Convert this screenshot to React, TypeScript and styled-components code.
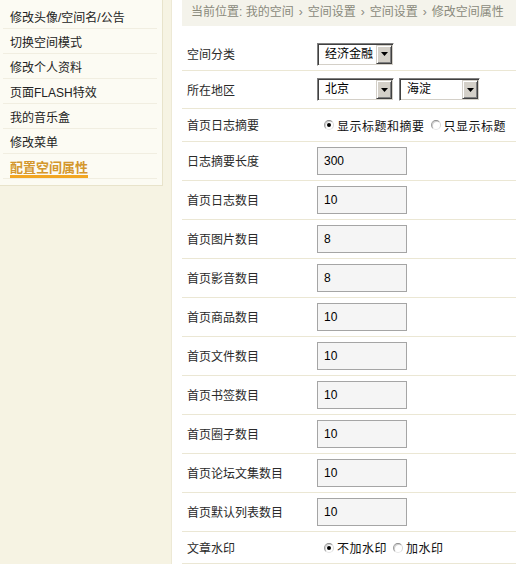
import React from "react";
import styled, { createGlobalStyle } from "styled-components";

const GlobalStyle = createGlobalStyle`
  html, body {
    margin: 0;
    padding: 0;
    background: #f6f3e3;
  }
  body {
    font-family: "Liberation Sans", "Noto Sans CJK SC", sans-serif;
    font-size: 12px;
    color: #222;
  }
  * { box-sizing: border-box; }
`;

const Page = styled.div`
  display: flex;
  align-items: stretch;
  min-height: 100vh;
`;

/* ---------- left menu ---------- */

const Sidebar = styled.nav`
  flex: none;
  align-self: flex-start;
  width: 163px;
  padding: 4px 5px 6px 3px;
  background: #fcfbf3;
  border-right: 1px solid #e8e3cb;
  border-bottom: 1px solid #e8e3cb;
`;

const MenuList = styled.ul`
  list-style: none;
  margin: 0;
  padding: 0;
`;

const MenuItem = styled.li<{ $active?: boolean }>`
  display: flex;
  align-items: ${(p) => (p.$active ? "flex-end" : "center")};
  height: 25px;
  padding-left: 7px;
  border-bottom: 1px solid #f1eee1;
  color: #222;
  font-size: 12px;
  white-space: nowrap;
`;

const ActiveLabel = styled.span`
  display: inline-block;
  font-size: 13px;
  line-height: 15px;
  font-weight: bold;
  color: #d4972c;
  border-bottom: 3px solid #f2a623;
`;

/* ---------- main panel ---------- */

const Main = styled.main`
  flex: 1;
  margin-left: 8px;
  padding-left: 10px;
  background: #fff;
  border-left: 1px solid #ede9d5;
`;

const Breadcrumb = styled.div`
  height: 26px;
  line-height: 25px;
  padding-left: 9px;
  background: #f4f3eb;
  color: #8a8a7c;
  font-size: 12px;
  white-space: nowrap;
`;

const Sep = styled.span`
  margin: 0 5px;
`;

const Form = styled.div`
  margin-top: 12px;
`;

const Row = styled.div<{ $h: number }>`
  display: flex;
  align-items: center;
  height: ${(p) => p.$h}px;
  padding-left: 5px;
  border-bottom: 1px solid #ebe7d4;
`;

const Label = styled.div`
  flex: none;
  width: 130px;
  color: #2a2a2a;
  font-size: 12px;
  padding-bottom: 1px;
`;

const Controls = styled.div`
  display: flex;
  align-items: center;
  gap: 5px;
`;

const TextInput = styled.div`
  width: 90px;
  height: 28px;
  line-height: 26px;
  padding-left: 6px;
  border: 1px solid #a5a5a5;
  background: #f5f5f5;
  color: #000;
  font-family: "Liberation Sans", Arial, sans-serif;
  font-size: 12px;
`;

const SelectBox = styled.div<{ $w: number }>`
  display: flex;
  align-items: stretch;
  width: ${(p) => p.$w}px;
  height: 23px;
  background: #fff;
  border: 1px solid;
  border-color: #808080 #ffffff #ffffff #808080;
  box-shadow: inset 1px 1px 0 #404040, inset -1px -1px 0 #d4d0c8;
  padding: 1px;
`;

const SelectText = styled.div`
  flex: 1;
  padding-left: 6px;
  line-height: 19px;
  font-size: 12px;
  color: #000;
  white-space: nowrap;
  overflow: hidden;
`;

const DropButton = styled.div`
  flex: none;
  width: 16px;
  display: flex;
  align-items: center;
  justify-content: center;
  background: #d4d0c8;
  border: 1px solid;
  border-color: #d4d0c8 #404040 #404040 #d4d0c8;
  box-shadow: inset 1px 1px 0 #ffffff, inset -1px -1px 0 #808080;
`;

const RadioGroup = styled.div`
  display: flex;
  align-items: center;
  padding-left: 7px;
`;

const RadioOption = styled.label`
  display: inline-flex;
  align-items: center;
  gap: 3px;
  margin-right: 6px;
  font-size: 12px;
  letter-spacing: 0.5px;
  color: #111;
  white-space: nowrap;
`;

const RadioDot = styled.span<{ $on?: boolean }>`
  position: relative;
  width: 10px;
  height: 10px;
  border-radius: 50%;
  background: #fff;
  border: 1px solid;
  border-color: #8d8d8d #d8d8d8 #e6e6e6 #9a9a9a;
  box-shadow: inset 1px 1px 0 #d0d0d0;
  &::after {
    content: "";
    display: ${(p) => (p.$on ? "block" : "none")};
    position: absolute;
    left: 2px;
    top: 2px;
    width: 4px;
    height: 4px;
    border-radius: 50%;
    background: #000;
  }
`;

const Arrow = () => (
  <svg width="7" height="4" viewBox="0 0 7 4">
    <polygon points="0,0 7,0 3.5,4" fill="#000" />
  </svg>
);

const Select = ({ value, width }: { value: string; width: number }) => (
  <SelectBox $w={width}>
    <SelectText>{value}</SelectText>
    <DropButton>
      <Arrow />
    </DropButton>
  </SelectBox>
);

const Radio = ({ label, on }: { label: string; on?: boolean }) => (
  <RadioOption>
    <RadioDot $on={on} />
    {label}
  </RadioOption>
);

const menu = [
  "修改头像/空间名/公告",
  "切换空间模式",
  "修改个人资料",
  "页面FLASH特效",
  "我的音乐盒",
  "修改菜单",
];

const numberFields: [string, string][] = [
  ["日志摘要长度", "300"],
  ["首页日志数目", "10"],
  ["首页图片数目", "8"],
  ["首页影音数目", "8"],
  ["首页商品数目", "10"],
  ["首页文件数目", "10"],
  ["首页书签数目", "10"],
  ["首页圈子数目", "10"],
  ["首页论坛文集数目", "10"],
  ["首页默认列表数目", "10"],
];

export default function App() {
  return (
    <>
      <GlobalStyle />
      <Page>
        <Sidebar>
          <MenuList>
            {menu.map((m) => (
              <MenuItem key={m}>{m}</MenuItem>
            ))}
            <MenuItem $active>
              <ActiveLabel>配置空间属性</ActiveLabel>
            </MenuItem>
          </MenuList>
        </Sidebar>
        <Main>
          <Breadcrumb>
            当前位置: 我的空间<Sep>›</Sep>空间设置<Sep>›</Sep>空间设置<Sep>›</Sep>修改空间属性
          </Breadcrumb>
          <Form>
            <Row $h={33}>
              <Label>空间分类</Label>
              <Controls>
                <Select value="经济金融" width={77} />
              </Controls>
            </Row>
            <Row $h={38}>
              <Label>所在地区</Label>
              <Controls>
                <Select value="北京" width={77} />
                <Select value="海淀" width={81} />
              </Controls>
            </Row>
            <Row $h={33}>
              <Label>首页日志摘要</Label>
              <RadioGroup>
                <Radio label="显示标题和摘要" on />
                <Radio label="只显示标题" />
              </RadioGroup>
            </Row>
            {numberFields.map(([label, value]) => (
              <Row $h={39} key={label}>
                <Label>{label}</Label>
                <Controls>
                  <TextInput>{value}</TextInput>
                </Controls>
              </Row>
            ))}
            <Row $h={32}>
              <Label>文章水印</Label>
              <RadioGroup>
                <Radio label="不加水印" on />
                <Radio label="加水印" />
              </RadioGroup>
            </Row>
          </Form>
        </Main>
      </Page>
    </>
  );
}
